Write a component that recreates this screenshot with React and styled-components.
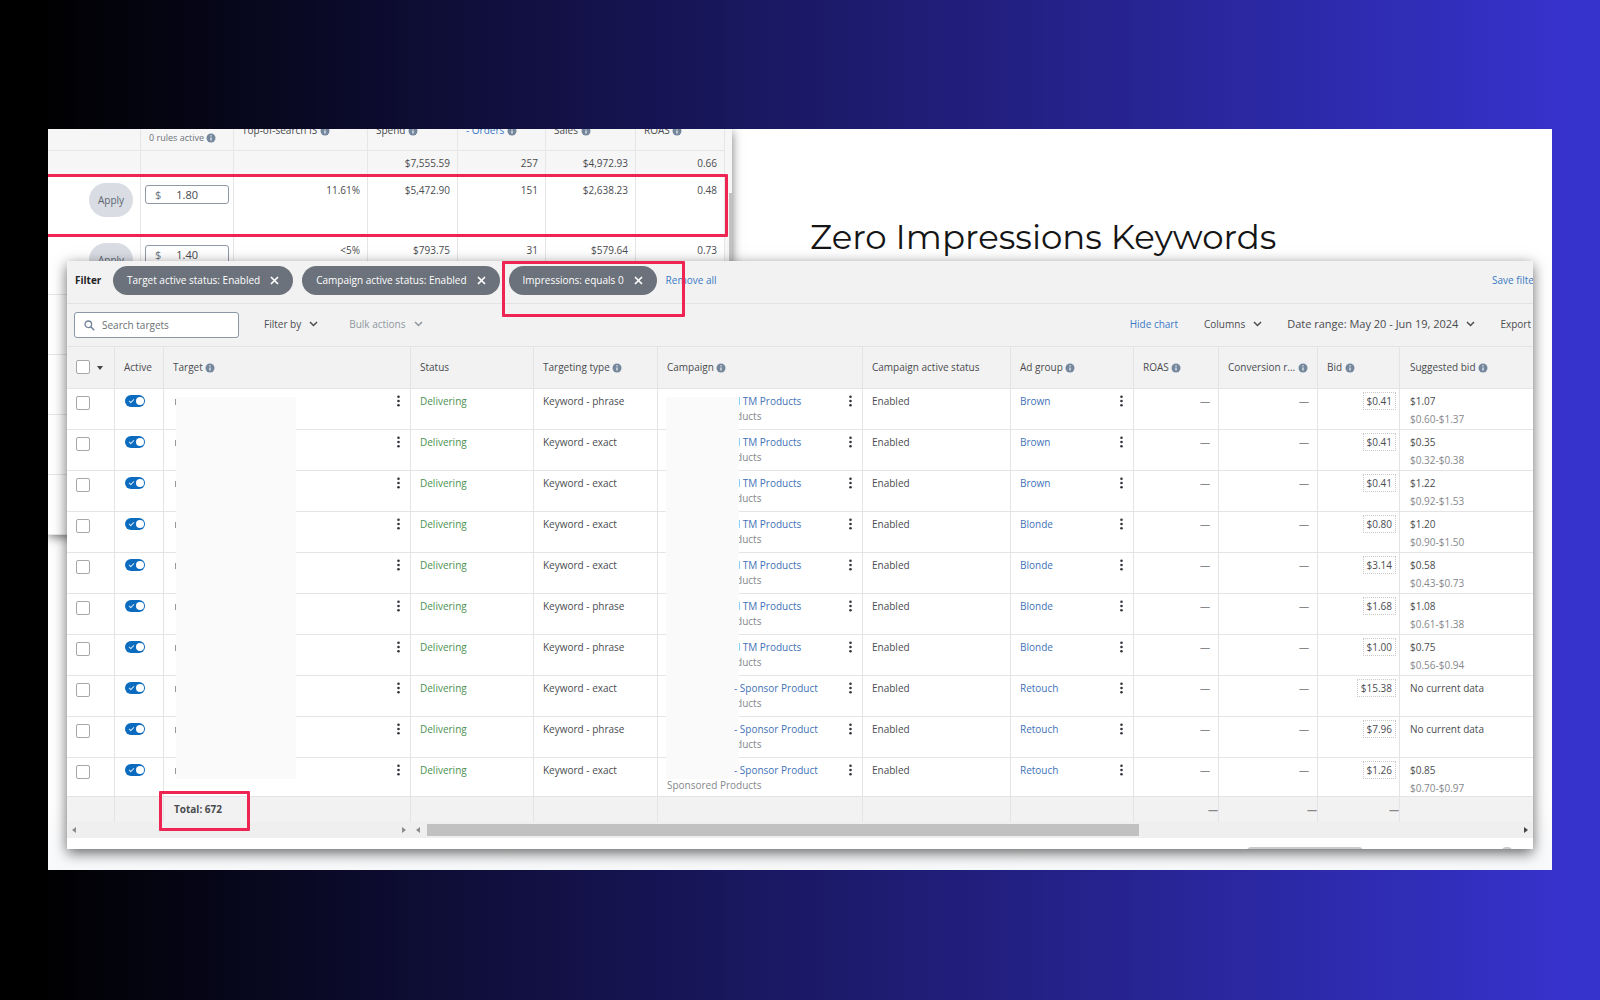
import React from "react";
import styled, { createGlobalStyle } from "styled-components";

const GlobalStyle = createGlobalStyle`
  * {
    box-sizing: border-box;
  }
  body {
    margin: 0;
    font-family: "Open Sans", "Noto Sans", sans-serif;
    font-size: 10px;
    line-height: 14px;
    color: #4a4c50;
  }
  button, input {
    font: inherit;
    color: inherit;
  }
  button {
    padding: 0;
    border: 0;
    background: none;
    cursor: pointer;
  }
  table {
    width: 100%;
    table-layout: fixed;
    border-collapse: separate;
    border-spacing: 0;
  }
  th {
    font-weight: 400;
    text-align: left;
  }
`;

const Page = styled.div`
  min-height: 100vh;
  padding: 129px 3vw;
  background: linear-gradient(90deg, #000 2%, #3632cc 98%);
`;

const Slide = styled.main`
  background: linear-gradient(#fff 90%, #f8f9fb);
  padding-bottom: 21px;
  overflow: hidden;
`;

const Top = styled.div`
  display: flex;
  height: 132px;
`;

const Heading = styled.h1`
  margin: 86px 0 0 78px;
  font-family: Montserrat, Inter, sans-serif;
  font-size: 34px;
  line-height: 44px;
  font-weight: 400;
  color: #151515;
  white-space: nowrap;
`;

/* back window */
const BackWindow = styled.section`
  position: relative;
  display: flex;
  flex: 0 0 684px;
  height: 405px;
  background: #fff;
  box-shadow: 0 3px 10px rgba(0, 0, 0, 0.55);
`;

const BackTable = styled.table`
  flex: 1;
  height: 426px;
  margin-top: -20px;
  th,
  td {
    border-right: 1px solid #e6e6e6;
    border-bottom: 1px solid #e6e6e6;
    padding: 0 7px 0 4px;
  }
  th {
    height: 42px;
    background: #f6f6f6;
    padding-left: 8px;
    padding-right: 0;
    white-space: nowrap;
  }
`;

const TotalsRow = styled.tr`
  td {
    height: 24px;
    background: #f6f6f6;
    text-align: right;
  }
`;

const BackRow = styled.tr`
  td {
    height: 60px;
    padding-top: 8px;
    vertical-align: top;
    text-align: right;
  }
  td:nth-child(2) {
    padding-right: 4px;
  }
`;

const RulesLabel = styled.span`
  display: block;
  padding-top: 16px;
  font-size: 9px;
  color: #6d7278;
`;

const ApplyButton = styled.button`
  width: 44px;
  height: 34px;
  border-radius: 17px;
  background: #d9dce3;
  color: #5b6570;
`;

const MoneyField = styled.label`
  display: flex;
  align-items: center;
  height: 19px;
  margin-top: 2px;
  padding-left: 9px;
  border: 1px solid #8f99a5;
  border-radius: 3px;
  font-size: 11px;
  color: #66717d;
  input {
    width: 48px;
    margin-left: 15px;
    padding: 0;
    border: 0;
    background: none;
    color: #45494d;
  }
`;

const SideScroll = styled.div`
  width: 7px;
  padding-top: 64px;
  background: #f6f6f6;
  &::after {
    content: "";
    display: block;
    height: 160px;
    margin-left: 4px;
    background: #c1c1c1;
  }
`;

const Highlight = styled.div`
  position: absolute;
  border: 3px solid #ee2452;
  border-radius: 1px;
  pointer-events: none;
`;
const RowHighlight = styled(Highlight)`
  top: 45px;
  left: -3px;
  width: 683px;
  height: 63px;
`;
const ChipHighlight = styled(Highlight)`
  top: 0;
  left: 435px;
  width: 183px;
  height: 56px;
`;
const TotalHighlight = styled(Highlight)`
  bottom: 18px;
  left: 92px;
  width: 91px;
  height: 40px;
`;

/* front window */
const FrontWindow = styled.section`
  position: relative;
  margin: 0 19px;
  height: 588px;
  background: #fff;
  box-shadow: 0 4px 13px rgba(0, 0, 0, 0.6);
`;

const Clip = styled.div`
  overflow: hidden;
  height: 100%;
`;

const FilterBar = styled.div`
  display: flex;
  align-items: center;
  height: 43px;
  padding: 0 0 4px 8px;
  background: #f2f2f2;
  border-bottom: 1px solid #e3e3e3;
  white-space: nowrap;
  strong {
    width: 38px;
    font-weight: 700;
    color: #222;
  }
`;

const Chip = styled.button`
  display: flex;
  align-items: center;
  gap: 10px;
  height: 29px;
  margin-right: 9px;
  padding: 0 14px;
  border-radius: 15px;
  background: #6c727b;
  color: #fff;
`;

const Link = styled.a`
  color: ${(p) => (p.$cell ? "#4272b8" : "#3b7ac6")};
  text-decoration: none;
`;

const SaveLink = styled(Link)`
  width: 41px;
  margin-left: auto;
  overflow: hidden;
`;

const Toolbar = styled.div`
  display: flex;
  align-items: center;
  height: 43px;
  padding-left: 7px;
  background: #f2f2f2;
  border-bottom: 1px solid #e3e3e3;
  white-space: nowrap;
`;

const SearchBox = styled.label`
  display: flex;
  align-items: center;
  gap: 7px;
  width: 165px;
  height: 26px;
  margin-right: 25px;
  padding-left: 9px;
  border: 1px solid #8a97a6;
  border-radius: 3px;
  background: #fff;
  input {
    width: 120px;
    padding: 0;
    border: 0;
    outline: 0;
    background: none;
  }
  input::placeholder {
    color: #6b7076;
    opacity: 1;
  }
`;

const ToolButton = styled.button`
  display: flex;
  align-items: center;
  gap: 8px;
  margin: 0 ${(p) => p.$gap || 25}px 2px 0;
  font-size: ${(p) => (p.$large ? 11 : 10)}px;
  color: ${(p) => (p.$muted ? "#8f989f" : "#4a4c50")};
`;

const ChartLink = styled(Link)`
  margin: 0 26px 2px 0;
`;

const ToolsRight = styled.div`
  display: flex;
  align-items: center;
  margin-left: auto;
`;

const TableWrap = styled.div`
  position: relative;
`;

const TargetTable = styled.table`
  th,
  td {
    padding: 0 8px 0 9px;
    border-right: 1px solid #e4e4e4;
    border-bottom: 1px solid #e4e4e4;
    white-space: nowrap;
  }
  th:last-child,
  td:last-child {
    padding-left: 10px;
    border-right: 0;
  }
  th {
    height: 42px;
    padding-bottom: 2px;
    background: #f2f2f2;
  }
  tbody td {
    height: 41px;
    padding-top: 5px;
    vertical-align: top;
  }
  tbody tr:last-child td {
    height: 39px;
  }
  tfoot td {
    height: 25px;
    padding: 0 0 2px 10px;
    background: #f2f2f2;
    border-bottom: 0;
    font-weight: 700;
  }
`;

const CheckBox = styled.input`
  appearance: none;
  display: inline-block;
  width: 14px;
  height: 14px;
  margin: ${(p) => (p.$head ? "0" : "2px")} 0 0;
  border: 1px solid #a5a8ab;
  border-radius: 2px;
  background: #fff;
  vertical-align: middle;
`;

const MenuCaret = styled.span`
  display: inline-block;
  margin-left: 7px;
  border: 3px solid transparent;
  border-top: 4px solid #444;
  border-bottom: 0;
`;

const Toggle = styled.input`
  appearance: none;
  position: relative;
  display: block;
  width: 20px;
  height: 12px;
  margin: 1px 0 0 1px;
  border-radius: 6px;
  background: #0b6cbf;
  &::before {
    content: "";
    position: absolute;
    top: 4px;
    left: 4px;
    width: 4px;
    height: 2px;
    border-left: 1px solid #cfe4f6;
    border-bottom: 1px solid #cfe4f6;
    rotate: -45deg;
  }
  &::after {
    content: "";
    position: absolute;
    top: 2px;
    right: 1px;
    width: 8px;
    height: 8px;
    border-radius: 4px;
    background: #fff;
  }
`;

const Split = styled.div`
  display: flex;
  justify-content: space-between;
`;

const KeywordEdge = styled.span`
  width: 1px;
  height: 6px;
  margin: 5px 0 0 2px;
  background: #999;
`;

const KebabButton = styled.button`
  display: flex;
  width: 8px;
  height: 14px;
  align-items: center;
  justify-content: center;
`;

const Delivering = styled.span`
  color: #4b9150;
`;

const CampaignLink = styled(Link)`
  position: relative;
  z-index: ${(p) => (p.$above ? 1 : 0)};
  padding-left: 67px;
`;

const Sub = styled.div`
  margin-top: 1px;
  color: #85888b;
`;

const Range = styled(Sub)`
  margin-top: 4px;
`;

const Num = styled.td`
  text-align: right;
  color: #888;
`;

const BidCell = styled.td`
  && {
    padding: 3px 3px 0 0;
    text-align: right;
  }
`;

const BidButton = styled.button`
  height: 18px;
  padding: 0 3px;
  border: 1px dotted #c9c9c9;
`;

const Cover = styled.div`
  position: absolute;
  top: 50px;
  left: ${(p) => p.$left}px;
  width: ${(p) => p.$width}px;
  height: 382px;
  background: #fafafa;
`;

const ScrollRow = styled.div`
  display: flex;
  align-items: center;
  height: 16px;
  background: #efefef;
`;

const LeftTrack = styled.div`
  display: flex;
  justify-content: space-between;
  width: 344px;
  padding: 0 5px;
`;

const MainTrack = styled.div`
  display: flex;
  flex: 1;
  align-items: center;
  gap: 7px;
  padding: 0 5px;
`;

const Thumb = styled.div`
  width: 64%;
  height: 12px;
  margin-right: auto;
  background: #c1c1c1;
`;

const Arrow = styled.span`
  border: 3px solid transparent;
  border-${(p) => (p.$left ? "right" : "left")}: 4px solid ${(p) => (p.$dark ? "#444" : "#8b8b8b")};
  border-${(p) => (p.$left ? "left" : "right")}: 0;
`;

const Pager = styled.div`
  display: flex;
  justify-content: flex-end;
  gap: 139px;
  padding: 9px 21px 0 0;
`;

const PagerPart = styled.span`
  width: ${(p) => p.$width}px;
  height: 8px;
  border-radius: 4px;
  background: #c9cacb;
`;

const IconSvg = styled.svg`
  display: inline-block;
  flex: none;
  vertical-align: -2px;
`;

const Info = () => (
  <IconSvg width="10" height="10" viewBox="0 0 10 10" aria-hidden="true">
    <circle cx="5" cy="5" r="4.5" fill="#75879c" />
    <path d="M5 4.4v3M5 2.3v1.1" stroke="#e9edf2" strokeWidth="1.3" />
  </IconSvg>
);

const Chevron = () => (
  <IconSvg width="9" height="6" viewBox="0 0 9 6" fill="none" aria-hidden="true">
    <path d="M1 1l3.5 3.5L8 1" stroke="currentColor" strokeWidth="1.5" />
  </IconSvg>
);

const Close = () => (
  <IconSvg width="9" height="9" viewBox="0 0 9 9" aria-hidden="true">
    <path d="M1 1l7 7M8 1L1 8" stroke="#fff" strokeWidth="1.7" />
  </IconSvg>
);

const Search = () => (
  <IconSvg width="11" height="11" viewBox="0 0 11 11" fill="none" aria-hidden="true">
    <circle cx="4.3" cy="4.3" r="3.3" stroke="#71839a" strokeWidth="1.3" />
    <path d="M6.8 6.8l3.5 3.5" stroke="#71839a" strokeWidth="1.5" />
  </IconSvg>
);

const Kebab = ({ label }) => (
  <KebabButton aria-label={label}>
    <svg width="3" height="12" viewBox="0 0 3 12" fill="#33363a">
      <circle cx="1.5" cy="1.7" r="1.3" />
      <circle cx="1.5" cy="6" r="1.3" />
      <circle cx="1.5" cy="10.3" r="1.3" />
    </svg>
  </KebabButton>
);

const filters = [
  "Target active status: Enabled",
  "Campaign active status: Enabled",
  "Impressions: equals 0",
];

const backColumns = [93, 93, 134, 90, 88, 90, 89];

const backRows = [
  { bid: "1.80", cells: ["11.61%", "$5,472.90", "151", "$2,638.23", "0.48"] },
  { bid: "1.40", cells: ["<5%", "$793.75", "31", "$579.64", "0.73"] },
];

const columns = [48, 49, 247, 123, 124, 205, 148, 123, 85, 99, 82];

const tm = "d TM Products";
const sp = "- Sponsor Product";
const targets = [
  ["phrase", tm, "Brown", "$0.41", "$1.07", "$0.60-$1.37"],
  ["exact", tm, "Brown", "$0.41", "$0.35", "$0.32-$0.38"],
  ["exact", tm, "Brown", "$0.41", "$1.22", "$0.92-$1.53"],
  ["exact", tm, "Blonde", "$0.80", "$1.20", "$0.90-$1.50"],
  ["exact", tm, "Blonde", "$3.14", "$0.58", "$0.43-$0.73"],
  ["phrase", tm, "Blonde", "$1.68", "$1.08", "$0.61-$1.38"],
  ["phrase", tm, "Blonde", "$1.00", "$0.75", "$0.56-$0.94"],
  ["exact", sp, "Retouch", "$15.38", "No current data"],
  ["phrase", sp, "Retouch", "$7.96", "No current data"],
  ["exact", sp, "Retouch", "$1.26", "$0.85", "$0.70-$0.97"],
];

const CampaignsBehind = () => (
  <BackWindow>
    <BackTable>
      <colgroup>
        {backColumns.map((w, i) => (
          <col key={i} width={w} />
        ))}
      </colgroup>
      <thead>
        <tr>
          <th />
          <th>
            <RulesLabel>
              0 rules active <Info />
            </RulesLabel>
          </th>
          <th>
            Top-of-search IS <Info />
          </th>
          <th>
            Spend <Info />
          </th>
          <th>
            <Link href="#orders">- Orders</Link> <Info />
          </th>
          <th>
            Sales <Info />
          </th>
          <th>
            ROAS <Info />
          </th>
        </tr>
      </thead>
      <tbody>
        <TotalsRow>
          <td />
          <td />
          <td />
          <td>$7,555.59</td>
          <td>257</td>
          <td>$4,972.93</td>
          <td>0.66</td>
        </TotalsRow>
        {backRows.map((row) => (
          <BackRow key={row.bid}>
            <td>
              <ApplyButton>Apply</ApplyButton>
            </td>
            <td>
              <MoneyField>
                $ <input defaultValue={row.bid} aria-label="Bid" />
              </MoneyField>
            </td>
            {row.cells.map((c) => (
              <td key={c}>{c}</td>
            ))}
          </BackRow>
        ))}
        {[0, 1, 2, 3].map((r) => (
          <BackRow key={r}>
            {backColumns.map((_, i) => (
              <td key={i} />
            ))}
          </BackRow>
        ))}
      </tbody>
    </BackTable>
    <SideScroll />
    <RowHighlight />
  </BackWindow>
);

const TargetRow = ({ row }) => {
  const [match, campaign, group, bid, suggested, range] = row;
  return (
    <tr>
      <td>
        <CheckBox type="checkbox" aria-label="Select target" />
      </td>
      <td>
        <Toggle type="checkbox" defaultChecked aria-label="Active" />
      </td>
      <td>
        <Split>
          <KeywordEdge />
          <Kebab label="Target menu" />
        </Split>
      </td>
      <td>
        <Delivering>Delivering</Delivering>
      </td>
      <td>Keyword - {match}</td>
      <td>
        <Split>
          <CampaignLink $cell $above={campaign === sp} href="#campaign">
            {campaign}
          </CampaignLink>
          <Kebab label="Campaign menu" />
        </Split>
        <Sub>Sponsored Products</Sub>
      </td>
      <td>Enabled</td>
      <td>
        <Split>
          <Link $cell href="#group">
            {group}
          </Link>
          <Kebab label="Ad group menu" />
        </Split>
      </td>
      <Num>—</Num>
      <Num>—</Num>
      <BidCell>
        <BidButton>{bid}</BidButton>
      </BidCell>
      <td>
        {suggested}
        {range && <Range>{range}</Range>}
      </td>
    </tr>
  );
};

const TargetsWindow = () => (
  <FrontWindow>
    <Clip>
      <FilterBar>
        <strong>Filter</strong>
        {filters.map((f) => (
          <Chip key={f}>
            {f} <Close />
          </Chip>
        ))}
        <Link href="#remove">Remove all</Link>
        <SaveLink href="#save">Save filter</SaveLink>
      </FilterBar>
      <Toolbar>
        <SearchBox>
          <Search />
          <input placeholder="Search targets" aria-label="Search targets" />
        </SearchBox>
        <ToolButton $gap={31}>
          Filter by <Chevron />
        </ToolButton>
        <ToolButton $muted>
          Bulk actions <Chevron />
        </ToolButton>
        <ToolsRight>
          <ChartLink href="#chart">Hide chart</ChartLink>
          <ToolButton>
            Columns <Chevron />
          </ToolButton>
          <ToolButton $large>
            Date range: May 20 - Jun 19, 2024 <Chevron />
          </ToolButton>
          <ToolButton $gap={2}>Export</ToolButton>
        </ToolsRight>
      </Toolbar>
      <TableWrap>
        <TargetTable>
          <colgroup>
            {columns.map((w, i) => (
              <col key={i} width={w} />
            ))}
            <col />
          </colgroup>
          <thead>
            <tr>
              <th>
                <CheckBox $head type="checkbox" aria-label="Select all" />
                <MenuCaret />
              </th>
              <th>Active</th>
              <th>
                Target <Info />
              </th>
              <th>Status</th>
              <th>
                Targeting type <Info />
              </th>
              <th>
                Campaign <Info />
              </th>
              <th>Campaign active status</th>
              <th>
                Ad group <Info />
              </th>
              <th>
                ROAS <Info />
              </th>
              <th>
                Conversion r... <Info />
              </th>
              <th>
                Bid <Info />
              </th>
              <th>
                Suggested bid <Info />
              </th>
            </tr>
          </thead>
          <tbody>
            {targets.map((row, i) => (
              <TargetRow key={i} row={row} />
            ))}
          </tbody>
          <tfoot>
            <tr>
              <td />
              <td />
              <td>Total: 672</td>
              <td />
              <td />
              <td />
              <td />
              <td />
              <Num>—</Num>
              <Num>—</Num>
              <Num>—</Num>
              <td />
            </tr>
          </tfoot>
        </TargetTable>
        <Cover $left={109} $width={120} />
        <Cover $left={599} $width={73} />
      </TableWrap>
      <ScrollRow>
        <LeftTrack>
          <Arrow $left />
          <Arrow />
        </LeftTrack>
        <MainTrack>
          <Arrow $left />
          <Thumb />
          <Arrow $dark />
        </MainTrack>
      </ScrollRow>
      <Pager>
        <PagerPart $width={116} />
        <PagerPart $width={10} />
      </Pager>
    </Clip>
    <ChipHighlight />
    <TotalHighlight />
  </FrontWindow>
);

const App = () => (
  <>
    <GlobalStyle />
    <Page>
      <Slide>
        <Top>
          <CampaignsBehind />
          <Heading>Zero Impressions Keywords</Heading>
        </Top>
        <TargetsWindow />
      </Slide>
    </Page>
  </>
);

export default App;
